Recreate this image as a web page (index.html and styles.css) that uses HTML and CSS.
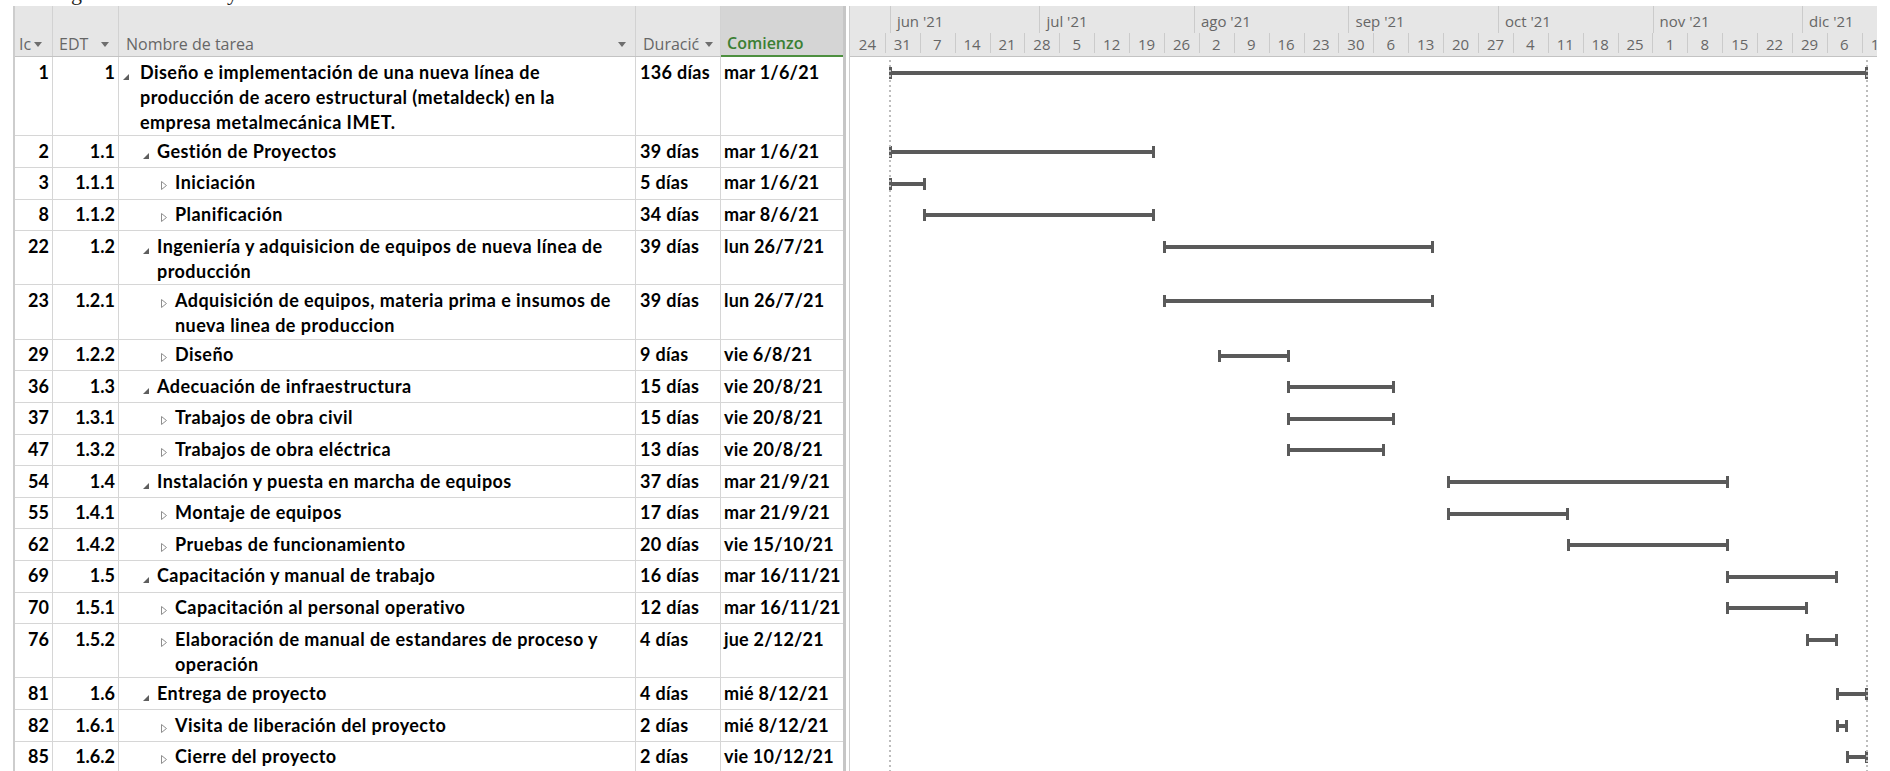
FILE: index.html
```html
<!DOCTYPE html>
<html lang="es">
<head>
<meta charset="utf-8">
<title>Diagrama de Gantt - Línea metaldeck IMET</title>
<link rel="stylesheet" href="styles.css">
</head>
<body>
<div class="page">
  <div class="caption"><span class="frag f1">g</span><span class="frag f2">y</span></div>

  <div class="view">
    <!-- task sheet -->
    <div class="sheet">
      <div class="row head">
        <div class="hc c-id"><span>Ic</span><svg class="dd dd-id" width="8" height="5" viewBox="0 0 8 5"><path d="M0 0H8L4 5Z"/></svg></div>
        <div class="hc c-edt"><span>EDT</span><svg class="dd dd-edt" width="8" height="5" viewBox="0 0 8 5"><path d="M0 0H8L4 5Z"/></svg></div>
        <div class="hc c-name"><span>Nombre de tarea</span><svg class="dd dd-name" width="8" height="5" viewBox="0 0 8 5"><path d="M0 0H8L4 5Z"/></svg></div>
        <div class="hc c-dur"><span>Duracić</span><svg class="dd dd-dur" width="8" height="5" viewBox="0 0 8 5"><path d="M0 0H8L4 5Z"/></svg></div>
        <div class="hc c-start sel"><span>Comienzo</span></div>
      </div>

      <div class="row r3">
        <div class="c-id">1</div><div class="c-edt">1</div>
        <div class="c-name"><span class="tog l1"><svg class="ex" width="6" height="6" viewBox="0 0 6 6"><path d="M6 0V6H0Z"/></svg></span><span class="txt">Diseño e implementación de una nueva línea de<br>producción de acero estructural (metaldeck) en la<br>empresa metalmecánica IMET.</span></div>
        <div class="c-dur">136 días</div><div class="c-start">mar 1/6/21</div>
      </div>
      <div class="row r1">
        <div class="c-id">2</div><div class="c-edt">1.1</div>
        <div class="c-name"><span class="tog l2"><svg class="ex" width="6" height="6" viewBox="0 0 6 6"><path d="M6 0V6H0Z"/></svg></span><span class="txt">Gestión de Proyectos</span></div>
        <div class="c-dur">39 días</div><div class="c-start">mar 1/6/21</div>
      </div>
      <div class="row r1">
        <div class="c-id">3</div><div class="c-edt">1.1.1</div>
        <div class="c-name"><span class="tog l3"><svg class="co" width="6" height="9" viewBox="0 0 6 9"><path d="M0.5 0.5L5.5 4.5L0.5 8.5Z"/></svg></span><span class="txt">Iniciación</span></div>
        <div class="c-dur">5 días</div><div class="c-start">mar 1/6/21</div>
      </div>
      <div class="row r1">
        <div class="c-id">8</div><div class="c-edt">1.1.2</div>
        <div class="c-name"><span class="tog l3"><svg class="co" width="6" height="9" viewBox="0 0 6 9"><path d="M0.5 0.5L5.5 4.5L0.5 8.5Z"/></svg></span><span class="txt">Planificación</span></div>
        <div class="c-dur">34 días</div><div class="c-start">mar 8/6/21</div>
      </div>
      <div class="row r2">
        <div class="c-id">22</div><div class="c-edt">1.2</div>
        <div class="c-name"><span class="tog l2"><svg class="ex" width="6" height="6" viewBox="0 0 6 6"><path d="M6 0V6H0Z"/></svg></span><span class="txt">Ingeniería y adquisicion de equipos de nueva línea de<br>producción</span></div>
        <div class="c-dur">39 días</div><div class="c-start">lun 26/7/21</div>
      </div>
      <div class="row r2">
        <div class="c-id">23</div><div class="c-edt">1.2.1</div>
        <div class="c-name"><span class="tog l3"><svg class="co" width="6" height="9" viewBox="0 0 6 9"><path d="M0.5 0.5L5.5 4.5L0.5 8.5Z"/></svg></span><span class="txt">Adquisición de equipos, materia prima e insumos de<br>nueva linea de produccion</span></div>
        <div class="c-dur">39 días</div><div class="c-start">lun 26/7/21</div>
      </div>
      <div class="row r1">
        <div class="c-id">29</div><div class="c-edt">1.2.2</div>
        <div class="c-name"><span class="tog l3"><svg class="co" width="6" height="9" viewBox="0 0 6 9"><path d="M0.5 0.5L5.5 4.5L0.5 8.5Z"/></svg></span><span class="txt">Diseño</span></div>
        <div class="c-dur">9 días</div><div class="c-start">vie 6/8/21</div>
      </div>
      <div class="row r1">
        <div class="c-id">36</div><div class="c-edt">1.3</div>
        <div class="c-name"><span class="tog l2"><svg class="ex" width="6" height="6" viewBox="0 0 6 6"><path d="M6 0V6H0Z"/></svg></span><span class="txt">Adecuación de infraestructura</span></div>
        <div class="c-dur">15 días</div><div class="c-start">vie 20/8/21</div>
      </div>
      <div class="row r1">
        <div class="c-id">37</div><div class="c-edt">1.3.1</div>
        <div class="c-name"><span class="tog l3"><svg class="co" width="6" height="9" viewBox="0 0 6 9"><path d="M0.5 0.5L5.5 4.5L0.5 8.5Z"/></svg></span><span class="txt">Trabajos de obra civil</span></div>
        <div class="c-dur">15 días</div><div class="c-start">vie 20/8/21</div>
      </div>
      <div class="row r1">
        <div class="c-id">47</div><div class="c-edt">1.3.2</div>
        <div class="c-name"><span class="tog l3"><svg class="co" width="6" height="9" viewBox="0 0 6 9"><path d="M0.5 0.5L5.5 4.5L0.5 8.5Z"/></svg></span><span class="txt">Trabajos de obra eléctrica</span></div>
        <div class="c-dur">13 días</div><div class="c-start">vie 20/8/21</div>
      </div>
      <div class="row r1">
        <div class="c-id">54</div><div class="c-edt">1.4</div>
        <div class="c-name"><span class="tog l2"><svg class="ex" width="6" height="6" viewBox="0 0 6 6"><path d="M6 0V6H0Z"/></svg></span><span class="txt">Instalación y puesta en marcha de equipos</span></div>
        <div class="c-dur">37 días</div><div class="c-start">mar 21/9/21</div>
      </div>
      <div class="row r1">
        <div class="c-id">55</div><div class="c-edt">1.4.1</div>
        <div class="c-name"><span class="tog l3"><svg class="co" width="6" height="9" viewBox="0 0 6 9"><path d="M0.5 0.5L5.5 4.5L0.5 8.5Z"/></svg></span><span class="txt">Montaje de equipos</span></div>
        <div class="c-dur">17 días</div><div class="c-start">mar 21/9/21</div>
      </div>
      <div class="row r1">
        <div class="c-id">62</div><div class="c-edt">1.4.2</div>
        <div class="c-name"><span class="tog l3"><svg class="co" width="6" height="9" viewBox="0 0 6 9"><path d="M0.5 0.5L5.5 4.5L0.5 8.5Z"/></svg></span><span class="txt">Pruebas de funcionamiento</span></div>
        <div class="c-dur">20 días</div><div class="c-start">vie 15/10/21</div>
      </div>
      <div class="row r1">
        <div class="c-id">69</div><div class="c-edt">1.5</div>
        <div class="c-name"><span class="tog l2"><svg class="ex" width="6" height="6" viewBox="0 0 6 6"><path d="M6 0V6H0Z"/></svg></span><span class="txt">Capacitación y manual de trabajo</span></div>
        <div class="c-dur">16 días</div><div class="c-start">mar 16/11/21</div>
      </div>
      <div class="row r1">
        <div class="c-id">70</div><div class="c-edt">1.5.1</div>
        <div class="c-name"><span class="tog l3"><svg class="co" width="6" height="9" viewBox="0 0 6 9"><path d="M0.5 0.5L5.5 4.5L0.5 8.5Z"/></svg></span><span class="txt">Capacitación al personal operativo</span></div>
        <div class="c-dur">12 días</div><div class="c-start">mar 16/11/21</div>
      </div>
      <div class="row r2">
        <div class="c-id">76</div><div class="c-edt">1.5.2</div>
        <div class="c-name"><span class="tog l3"><svg class="co" width="6" height="9" viewBox="0 0 6 9"><path d="M0.5 0.5L5.5 4.5L0.5 8.5Z"/></svg></span><span class="txt">Elaboración de manual de estandares de proceso y<br>operación</span></div>
        <div class="c-dur">4 días</div><div class="c-start">jue 2/12/21</div>
      </div>
      <div class="row r1">
        <div class="c-id">81</div><div class="c-edt">1.6</div>
        <div class="c-name"><span class="tog l2"><svg class="ex" width="6" height="6" viewBox="0 0 6 6"><path d="M6 0V6H0Z"/></svg></span><span class="txt">Entrega de proyecto</span></div>
        <div class="c-dur">4 días</div><div class="c-start">mié 8/12/21</div>
      </div>
      <div class="row r1">
        <div class="c-id">82</div><div class="c-edt">1.6.1</div>
        <div class="c-name"><span class="tog l3"><svg class="co" width="6" height="9" viewBox="0 0 6 9"><path d="M0.5 0.5L5.5 4.5L0.5 8.5Z"/></svg></span><span class="txt">Visita de liberación del proyecto</span></div>
        <div class="c-dur">2 días</div><div class="c-start">mié 8/12/21</div>
      </div>
      <div class="row r1">
        <div class="c-id">85</div><div class="c-edt">1.6.2</div>
        <div class="c-name"><span class="tog l3"><svg class="co" width="6" height="9" viewBox="0 0 6 9"><path d="M0.5 0.5L5.5 4.5L0.5 8.5Z"/></svg></span><span class="txt">Cierre del proyecto</span></div>
        <div class="c-dur">2 días</div><div class="c-start">vie 10/12/21</div>
      </div>
    </div>

    <div class="split"></div>

    <!-- gantt chart -->
    <div class="chart">
      <div class="scale">
        <div class="tier months">
          <div class="mon m-lead"></div>
          <div class="mon m30">jun '21</div>
          <div class="mon m31">jul '21</div>
          <div class="mon m31">ago '21</div>
          <div class="mon m30">sep '21</div>
          <div class="mon m31">oct '21</div>
          <div class="mon m30">nov '21</div>
          <div class="mon m-rest">dic '21</div>
        </div>
        <div class="tier weeks">
          <div class="wk first">24</div><div class="wk">31</div><div class="wk">7</div><div class="wk">14</div><div class="wk">21</div>
          <div class="wk">28</div><div class="wk">5</div><div class="wk">12</div><div class="wk">19</div><div class="wk">26</div>
          <div class="wk">2</div><div class="wk">9</div><div class="wk">16</div><div class="wk">23</div><div class="wk">30</div>
          <div class="wk">6</div><div class="wk">13</div><div class="wk">20</div><div class="wk">27</div><div class="wk">4</div>
          <div class="wk">11</div><div class="wk">18</div><div class="wk">25</div><div class="wk">1</div><div class="wk">8</div>
          <div class="wk">15</div><div class="wk">22</div><div class="wk">29</div><div class="wk">6</div><div class="wk">13</div>
        </div>
      </div>

      <div class="bars">
        <div class="brow r3"><div class="bar" style="left:38.58px;width:979.56px"></div></div>
        <div class="brow r1"><div class="bar" style="left:38.58px;width:266.7px"></div></div>
        <div class="brow r1"><div class="bar" style="left:38.58px;width:37.4px"></div></div>
        <div class="brow r1"><div class="bar" style="left:73.48px;width:231.8px"></div></div>
        <div class="brow r2"><div class="bar" style="left:312.76px;width:271.7px"></div></div>
        <div class="brow r2"><div class="bar" style="left:312.76px;width:271.7px"></div></div>
        <div class="brow r1"><div class="bar" style="left:367.59px;width:72.3px"></div></div>
        <div class="brow r1"><div class="bar" style="left:437.38px;width:107.2px"></div></div>
        <div class="brow r1"><div class="bar" style="left:437.38px;width:107.2px"></div></div>
        <div class="brow r1"><div class="bar" style="left:437.38px;width:97.2px"></div></div>
        <div class="brow r1"><div class="bar" style="left:596.9px;width:281.7px"></div></div>
        <div class="brow r1"><div class="bar" style="left:596.9px;width:122.1px"></div></div>
        <div class="brow r1"><div class="bar" style="left:716.54px;width:162px"></div></div>
        <div class="brow r1"><div class="bar" style="left:876.06px;width:112.2px"></div></div>
        <div class="brow r1"><div class="bar" style="left:876.06px;width:82.3px"></div></div>
        <div class="brow r2"><div class="bar" style="left:955.82px;width:32.4px"></div></div>
        <div class="brow r1"><div class="bar" style="left:985.73px;width:32.4px"></div></div>
        <div class="brow r1"><div class="bar" style="left:985.73px;width:12.5px"></div></div>
        <div class="brow r1"><div class="bar" style="left:995.7px;width:22.4px"></div></div>

        <!-- project start / finish markers -->
        <div class="pline" style="left:38.6px"></div>
        <div class="pline" style="left:1015.6px"></div>
      </div>
    </div>
  </div>
</div>
</body>
</html>
```

FILE: styles.css
```css
* { box-sizing: border-box; }

html, body {
  margin: 0;
  padding: 0;
  background: #fff;
}

.page {
  width: 1890px;
  height: 771px;
  overflow: hidden;
  font-family: "Lato", "Liberation Sans", sans-serif;
  color: #000;
}

/* bottom edge of the caption line above the view */
.caption {
  height: 6px;
  overflow: hidden;
  font-family: "Liberation Serif", serif;
  font-size: 22px;
  line-height: 22px;
  color: #222;
  white-space: nowrap;
}
.frag { display: inline-block; margin-top: -18px; vertical-align: top; }
.f1 { margin-left: 71px; }
.f2 { margin-left: 145px; }

.view {
  display: flex;
  height: 765px;
}

/* ---------- task sheet ---------- */
.sheet {
  flex: none;
  width: 830px;
  margin-left: 13px;
  border-left: 2px solid #cdcdcd;
}

.row {
  display: grid;
  grid-template-columns: 38px 66px 517px 85px 122px;
  border-bottom: 1px solid #d6d6d6;
  font-weight: 700;
  font-size: 18px;
  line-height: 25px;
}
.row > div {
  border-right: 1px solid #d6d6d6;
  padding-top: 2.5px;
  white-space: nowrap;
  overflow: hidden;
}
.row > div:last-child { border-right: none; }

.r1 { height: 31.6px; }
.r2 { height: 54.3px; }
.r3 { height: 79.4px; }

.c-id, .c-edt { text-align: right; padding-right: 3px; }
.c-dur { padding-left: 4px; letter-spacing: 0.3px; }
.c-start { padding-left: 3px; letter-spacing: 0.2px; }

.c-name { display: flex; align-items: flex-start; letter-spacing: 0.45px; }
.tog { flex: none; height: 25px; }
.l1 { margin-left: 4px; width: 17px; }
.l2 { margin-left: 24px; width: 14px; }
.l3 { margin-left: 42px; width: 14px; }
.tog svg { display: block; }
.ex { margin-top: 14px; fill: #5e5e5e; }
.co { margin-top: 11px; fill: #fff; stroke: #8e8e8e; stroke-width: 1; }

/* header */
.head {
  height: 51px;
  background: #e6e6e6;
  border-bottom: 1px solid #c3c3c3;
  font-family: "Open Sans", "Liberation Sans", sans-serif;
  font-weight: 400;
  font-size: 16px;
  line-height: 24px;
  color: #666;
}
.head > .hc {
  display: flex;
  align-items: center;
  padding-top: 25px;
  letter-spacing: 0;
  border-right-color: #d2d2d2;
}
.head .c-id, .head .c-edt { text-align: left; }
.head .c-id { padding-left: 4px; padding-right: 0; }
.head .c-edt { padding-left: 6px; padding-right: 0; }
.head .c-name { padding-left: 7px; padding-right: 9px; justify-content: space-between; }
.head .c-dur { padding-left: 7px; }
.dd { fill: #6e6e6e; flex: none; margin-top: 2px; }
.dd-id { margin-left: 3px; }
.dd-edt { margin-left: 13px; }
.dd-dur { margin-left: 6px; }

.head .sel {
  background: #d5d5d5;
  color: #3b7f33;
  font-weight: 600;
  padding-left: 6px;
  border-bottom: 2px solid #4d8f3f;
  margin-bottom: -1px;
}

/* ---------- splitter ---------- */
.split {
  flex: none;
  width: 7px;
  border-left: 3px solid #c6c6c6;
  border-right: 1px solid #cdcdcd;
  background: #fff;
}

/* ---------- gantt chart ---------- */
.chart {
  flex: none;
  width: 1027px;
  overflow: hidden;
  font-family: "Open Sans", "Liberation Sans", sans-serif;
}

.scale {
  height: 51px;
  background: #e6e6e6;
  border-bottom: 1px solid #c3c3c3;
}
.tier {
  display: flex;
  white-space: nowrap;
  font-size: 15px;
  color: #666;
}
.months { height: 27px; }
.weeks { height: 23px; }

.mon {
  flex: none;
  height: 100%;
  padding: 3px 0 0 6px;
  line-height: 24px;
  border-left: 1px solid #cbcbcb;
}
.m-lead { width: 39.88px; border-left: none; }
.m30 { width: 149.55px; }
.m31 { width: 154.535px; }
.m-rest { flex: 1; }

.wk {
  flex: none;
  position: relative;
  width: 34.895px;
  height: 100%;
  line-height: 22px;
  text-align: center;
}
.wk::before {
  content: "";
  position: absolute;
  left: 0;
  top: 0;
  bottom: 3px;
  width: 1px;
  background: #cbcbcb;
}
.wk.first::before { display: none; }

.bars {
  position: relative;
  height: 714px;
}
.brow { position: relative; }

.bar {
  position: absolute;
  top: 13.8px;
  height: 4px;
  background: #5a5a5a;
}
.bar::before,
.bar::after {
  content: "";
  position: absolute;
  top: -4px;
  width: 3px;
  height: 12px;
  background: #5a5a5a;
}
.bar::before { left: 0; }
.bar::after { right: 0; }

.pline {
  position: absolute;
  top: 3px;
  bottom: 0;
  width: 2px;
  background: repeating-linear-gradient(to bottom, #bdbdbd 0 2px, transparent 2px 5px);
  z-index: 2;
}
```
